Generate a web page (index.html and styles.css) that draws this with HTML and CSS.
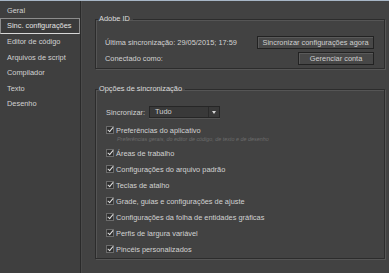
FILE: index.html
```html
<!DOCTYPE html>
<html lang="pt-BR">
<head>
    <meta charset="UTF-8">
    <title>Preferências</title>
    <link rel="stylesheet" href="styles.css">
</head>
<body>
    <div class="window">
        <ul class="sidebar">
            <li>Geral</li>
            <li class="active">Sinc. configurações</li>
            <li>Editor de código</li>
            <li>Arquivos de script</li>
            <li>Compilador</li>
            <li>Texto</li>
            <li>Desenho</li>
        </ul>
        <div class="panel">
            <fieldset class="group account">
                <legend>Adobe ID</legend>
                <div class="row">
                    <span>Última sincronização: 29/05/2015; 17:59</span>
                    <button class="btn">Sincronizar configurações agora</button>
                </div>
                <div class="row">
                    <span>Conectado como:</span>
                    <button class="btn btn-small">Gerenciar conta</button>
                </div>
            </fieldset>
            <fieldset class="group options">
                <legend>Opções de sincronização</legend>
                <div class="sync-select">
                    <span>Sincronizar:</span>
                    <div class="dropdown"><span>Tudo</span><i class="arrow"></i></div>
                </div>
                <label class="check first"><i class="box"></i>Preferências do aplicativo</label>
                <p class="hint">Preferências gerais, do editor de código, de texto e de desenho</p>
                <label class="check"><i class="box"></i>Áreas de trabalho</label>
                <label class="check"><i class="box"></i>Configurações do arquivo padrão</label>
                <label class="check"><i class="box"></i>Teclas de atalho</label>
                <label class="check"><i class="box"></i>Grade, guias e configurações de ajuste</label>
                <label class="check"><i class="box"></i>Configurações da folha de entidades gráficas</label>
                <label class="check"><i class="box"></i>Perfis de largura variável</label>
                <label class="check"><i class="box"></i>Pincéis personalizados</label>
            </fieldset>
        </div>
    </div>
</body>
</html>
```

FILE: styles.css
```css
body {
    margin: 0;
    padding: 0;
    background: #424242;
    font-family: "Liberation Sans", Arial, sans-serif;
    font-size: 7.4px;
    color: #d2d2d2;
}

.window {
    display: flex;
    height: 273px;
    border-top: 1px solid #a7b6c6;
    box-sizing: border-box;
}

.sidebar {
    list-style: none;
    margin: 0;
    padding: 2px 0 0 0;
    width: 80px;
    background: #3f3f3f;
    border-right: 1px solid #2a2a2a;
}

.sidebar li {
    height: 15.4px;
    line-height: 15px;
    padding-left: 7px;
    box-sizing: border-box;
    white-space: nowrap;
}

.sidebar li.active {
    height: 16px;
    background: #3b3b3b;
    border: 1px solid #8c8c8c;
    border-bottom-color: #d8d8d8;
    padding-left: 6px;
    line-height: 14px;
    color: #e4e4e4;
}

.panel {
    flex: 1;
    padding: 13px 4px 0 13px;
    border-left: 1px solid #4a4a4a;
}

.group {
    margin: 0;
    padding: 0;
    border: 1px solid #2c2c2c;
    box-shadow: 1px 1px 0 #555, inset 1px 1px 0 #555;
}

.group legend {
    padding: 0 3px 0 1px;
    line-height: 10px;
    color: #dcdcdc;
}

.account {
    height: 55px;
    box-sizing: border-box;
    padding: 11px 10px 0 9px;
}

.account legend {
    margin-left: -7px;
}

.row {
    display: flex;
    justify-content: space-between;
    align-items: center;
    height: 14px;
    margin-bottom: 2px;
}

.btn {
    font-family: inherit;
    font-size: 7.4px;
    color: #cfcfcf;
    background: #474747;
    border: 1px solid #222;
    box-shadow: inset 1px 1px 0 #5a5a5a;
    height: 13px;
    padding: 0 4px;
    line-height: 11px;
    width: 117px;
}

.btn-small {
    width: 76px;
}

.options {
    margin-top: 15px;
    height: 175px;
    box-sizing: border-box;
    padding: 12px 10px 0 10px;
}

.options legend {
    margin-left: -8px;
}

.sync-select {
    display: flex;
    align-items: center;
    gap: 4px;
    height: 12px;
    margin-bottom: 5px;
}

.dropdown {
    display: flex;
    align-items: center;
    width: 71px;
    height: 12px;
    box-sizing: border-box;
    background: #393939;
    border: 1px solid #262626;
    box-shadow: 0 1px 0 #555;
}

.dropdown span {
    flex: 1;
    padding-left: 5px;
    line-height: 10px;
}

.arrow {
    width: 10px;
    height: 10px;
    border-left: 1px solid #2a2a2a;
    position: relative;
}

.arrow::after {
    content: "";
    position: absolute;
    left: 3px;
    top: 4px;
    border-left: 2.5px solid transparent;
    border-right: 2.5px solid transparent;
    border-top: 3px solid #d8d8d8;
}

.check {
    display: flex;
    align-items: center;
    height: 16px;
    white-space: nowrap;
}

.check.first {
    height: 14px;
}

.box {
    width: 6px;
    height: 6px;
    margin-right: 2px;
    background: #303030;
    border: 1px solid #6c6c6c;
    position: relative;
}

.box::after {
    content: "";
    position: absolute;
    left: 2px;
    top: -1px;
    width: 2px;
    height: 5px;
    border-right: 1px solid #e0e0e0;
    border-bottom: 1px solid #e0e0e0;
    transform: rotate(40deg);
}

.hint {
    margin: 0 0 0 11px;
    height: 8px;
    line-height: 5px;
    font-size: 5.4px;
    font-style: italic;
    color: #6c6c6c;
    white-space: nowrap;
}
```
